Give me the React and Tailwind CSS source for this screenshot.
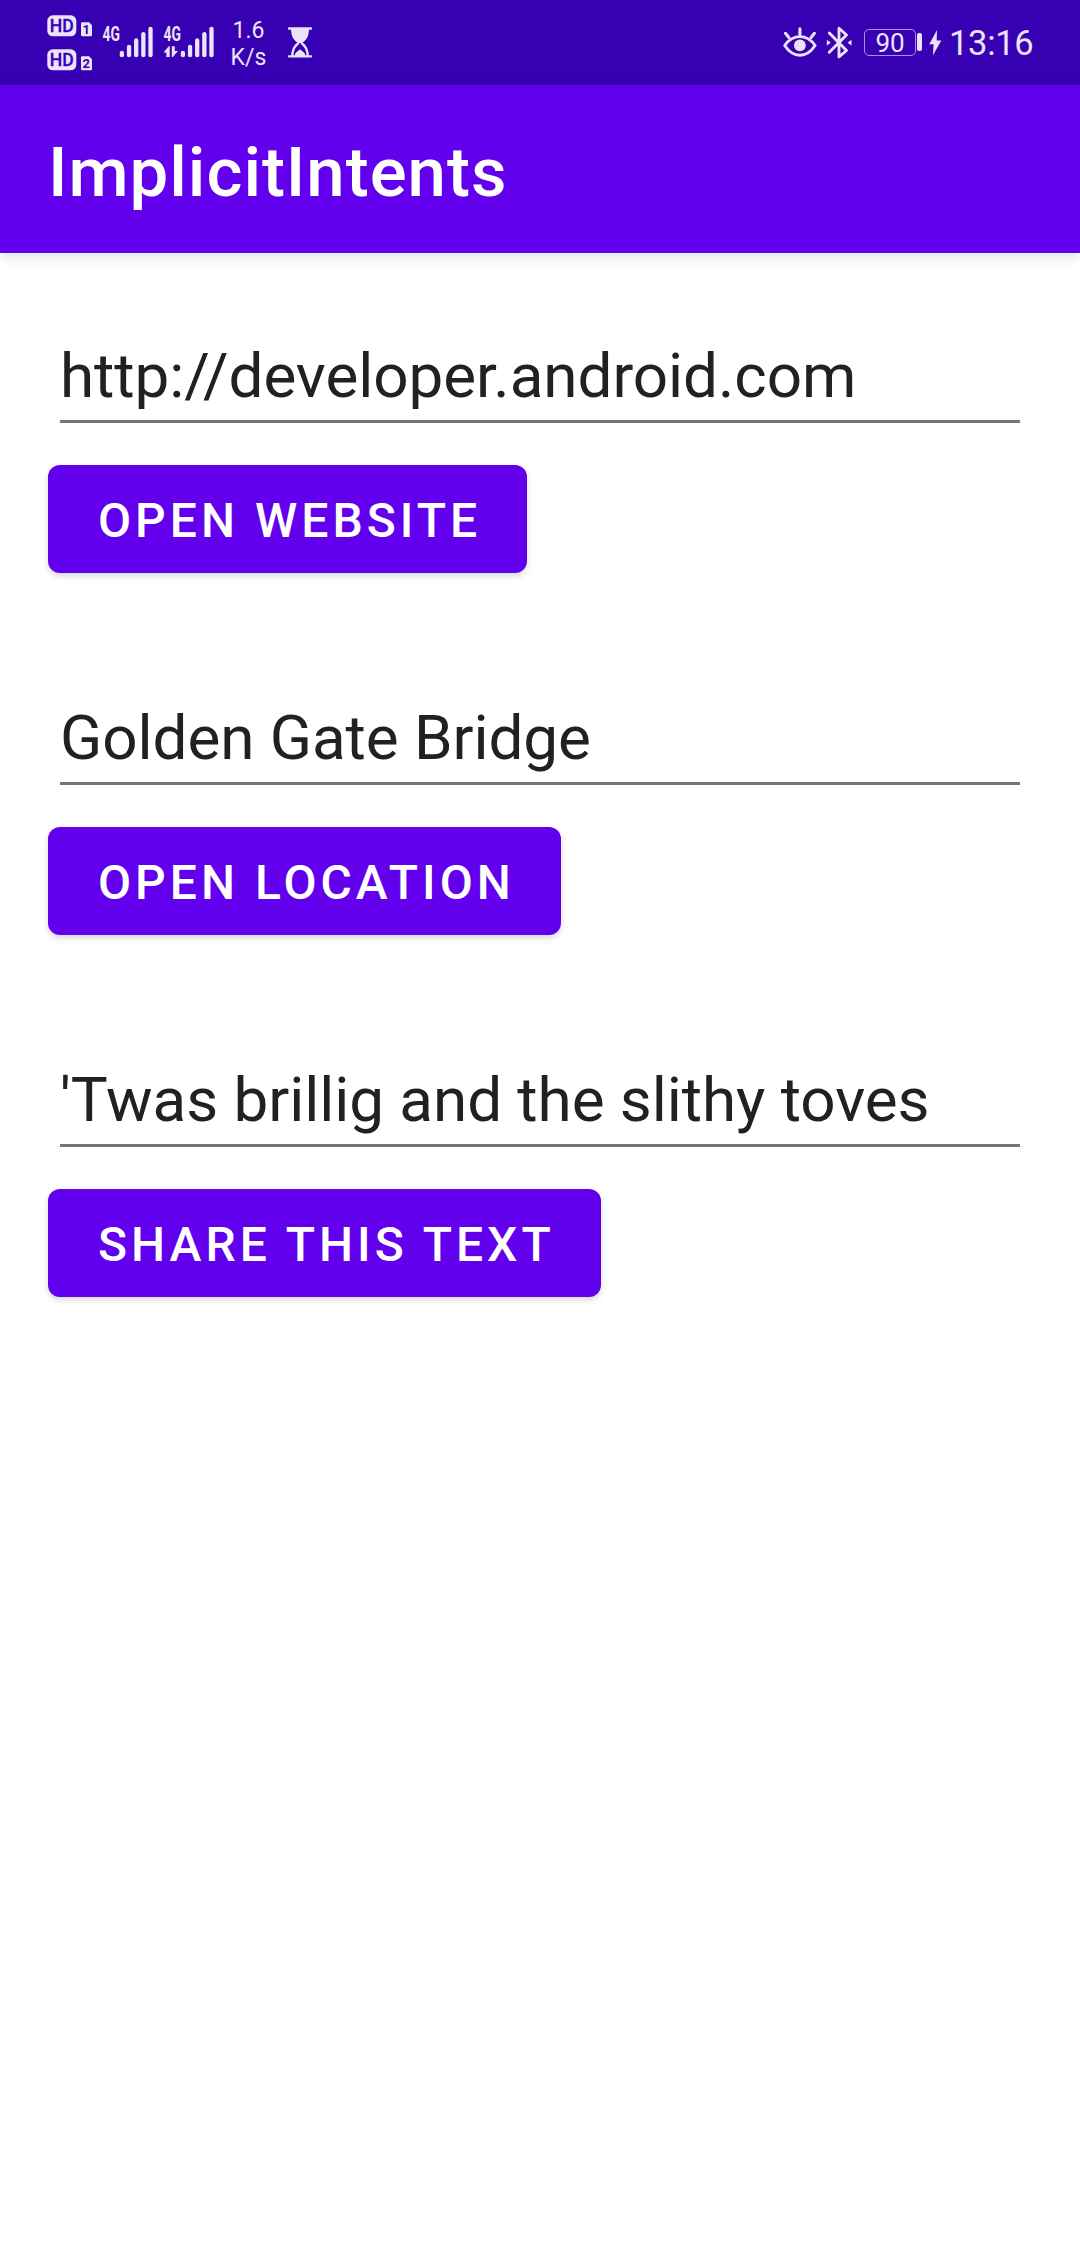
const INK = "#ebe3f9";
const BAR = "#3700b3";

function SimBadge({ slot }) {
  return (
    <svg className="block overflow-visible" width="46" height="22" viewBox="0 0 46 22" fontFamily="Roboto, sans-serif" fontWeight="700">
      <rect x="0.3" y="0.3" width="29" height="21" rx="5.5" fill={INK} />
      <text x="2.8" y="17.3" fontSize="18.6" fontWeight="500" fill={BAR} stroke={BAR} strokeWidth="0.3" textLength="24" lengthAdjust="spacingAndGlyphs">HD</text>
      <path d="M35 7.3h7l3 3v10a1 1 0 0 1-1 1h-9a1 1 0 0 1-1-1v-12a1 1 0 0 1 1-1z" fill={INK} />
      <text x="39.2" y="18.8" fontSize="13" textAnchor="middle" fill={BAR}>{slot}</text>
    </svg>
  );
}

function Signal({ data }) {
  const tops = [52.9, 46.8, 40.5, 34.2, 28.8];
  return (
    <svg className="block overflow-visible" width="52" height="38" viewBox="102 21 52 38">
      <text x="102.6" y="41" fontSize="20" fontWeight="700" fontFamily="Roboto, sans-serif" fill={INK} textLength="17.4" lengthAdjust="spacingAndGlyphs">4G</text>
      <g stroke={INK} strokeWidth="4.3" strokeLinecap="round">
        {tops.map((y, i) => (
          <path key={y} d={`M${121.9 + i * 7.15} ${y}V55.2`} />
        ))}
      </g>
      {data && (
        <g fill={INK}>
          <path d="M102.500 52.500l5.200-6.200h1V57h-3.300v-4.500z" />
          <path d="M110.800 46.300h3v4.600h3.200l-5.200 6.100h-1z" />
        </g>
      )}
    </svg>
  );
}

function Hourglass() {
  return (
    <svg className="block" width="24" height="31" viewBox="288 27.5 24 31">
      <path d="M289 29h22M289 56.8h22" stroke={INK} strokeWidth="2.3" strokeLinecap="round" />
      <path d="M291 29h18c0 8-2.500 11.500-7.300 14.800h-3.400C293.500 40.500 291 37 291 29z" fill={INK} />
      <path d="M298.600 43.500c-4.200 3-6.300 6-6.300 13M301.400 43.500c4.200 3 6.300 6 6.300 13" fill="none" stroke={INK} strokeWidth="2.300" />
      <path d="M294.500 56.500l1-3 4.500-3.800 4.500 3.800 1 3z" fill={INK} />
    </svg>
  );
}

function Eye() {
  return (
    <svg className="block" width="34" height="31" viewBox="782.500 27 34 31">
      <path d="M784.200 45.500c4-5.800 9-8.900 15.200-8.900s11.200 3.100 15.200 8.900c-4 6-9 9.800-15.200 9.800s-11.200-3.800-15.200-9.800z" fill="none" stroke={INK} strokeWidth="2.900" strokeLinejoin="round" />
      <circle cx="799.400" cy="45.300" r="5.900" fill={INK} />
      <path d="M799.400 28.700v6M785 33.300l3.400 4.300M813.900 33.300l-3.400 4.300" stroke={INK} strokeWidth="3.100" strokeLinecap="round" />
    </svg>
  );
}

function Bluetooth() {
  return (
    <svg className="block" width="26" height="33" viewBox="825.500 25.500 26 33">
      <path d="M828.800 32.500l17.200 17.500-7.500 6.300V27.700l7.500 6.800-17.200 17.200" fill="none" stroke={INK} strokeWidth="2.900" strokeLinecap="round" strokeLinejoin="round" />
      <path d="M826.300 39.300l4 2.900-4 2.900zM851 39.300l-4 2.900 4 2.900z" fill={INK} />
    </svg>
  );
}

function StatusBar() {
  return (
    <div className="flex h-[85px] items-start bg-[#3700b3] pl-[47px] pr-[47px] text-[#ebe3f9]">
      <div className="flex flex-col gap-3 pt-[15px]">
        <SimBadge slot="1" />
        <SimBadge slot="2" />
      </div>
      <div className="ml-[9px] flex gap-[9px] pt-[21px]">
        <Signal />
        <Signal data />
      </div>
      <div className="ml-[7px] w-[53px] pt-[17px] text-center text-[23px] leading-[27px]">
        <div>1.6</div>
        <div>K/s</div>
      </div>
      <div className="ml-[13px] pt-[27px]"><Hourglass /></div>
      <div className="ml-auto flex items-start">
        <div className="pt-[27px]"><Eye /></div>
        <div className="ml-[9px] pt-[26px]"><Bluetooth /></div>
        <div className="ml-[12px] mt-[29px] flex h-[27px] w-[52px] items-center justify-center rounded-[5px] border-[1.500px] border-[#a994dc] text-[26px] leading-none">90</div>
        <div className="ml-[1px] mt-[33px] h-[18px] w-[5px] rounded-[2px] bg-[#ebe3f9]" />
        <svg className="ml-[7px] mt-[30px] block" width="13" height="26" viewBox="0 0 13 26">
          <path d="M8 0L0.300 14.300h4.300L4 25.300 12.300 10.500H7.700z" fill={INK} />
        </svg>
        <div className="ml-[7px] mt-[23px] w-[84px] whitespace-nowrap text-[34.500px] leading-[40px] tracking-[-0.300px]">13:16</div>
      </div>
    </div>
  );
}

function Field({ value, action }) {
  return (
    <section className="flex h-[362px] flex-col items-start">
      <div className="mx-3 h-[87px] w-[960px] border-b-[3px] border-[#757575] text-[62px] leading-[80px] tracking-[-0.060px] text-[#212121] whitespace-nowrap">{value}</div>
      <button className="mt-[42px] h-[108px] rounded-[12px] bg-[#6200ee] pt-1 pl-[50px] pr-[46px] text-[48px] font-medium leading-[104px] tracking-[4.030px] whitespace-nowrap text-white shadow-[0_3px_6px_rgba(0,0,0,0.16)]">{action}</button>
    </section>
  );
}

export default function App() {
  return (
    <div className="min-h-[2244px] w-[1080px] bg-white font-['Roboto',sans-serif]">
      <StatusBar />
      <header className="flex h-[168px] items-center bg-[#6200ee] px-12 pt-[8px] shadow-[0_4px_12px_rgba(0,0,0,0.13)]">
        <h1 className="text-[69px] font-medium leading-[80px] tracking-[0.960px] text-white">ImplicitIntents</h1>
      </header>
      <main className="flex flex-col px-12 pt-[83px]">
        <Field value="http://developer.android.com" action="OPEN WEBSITE" />
        <Field value="Golden Gate Bridge" action="OPEN LOCATION" />
        <Field value="'Twas brillig and the slithy toves" action="SHARE THIS TEXT" />
      </main>
    </div>
  );
}
